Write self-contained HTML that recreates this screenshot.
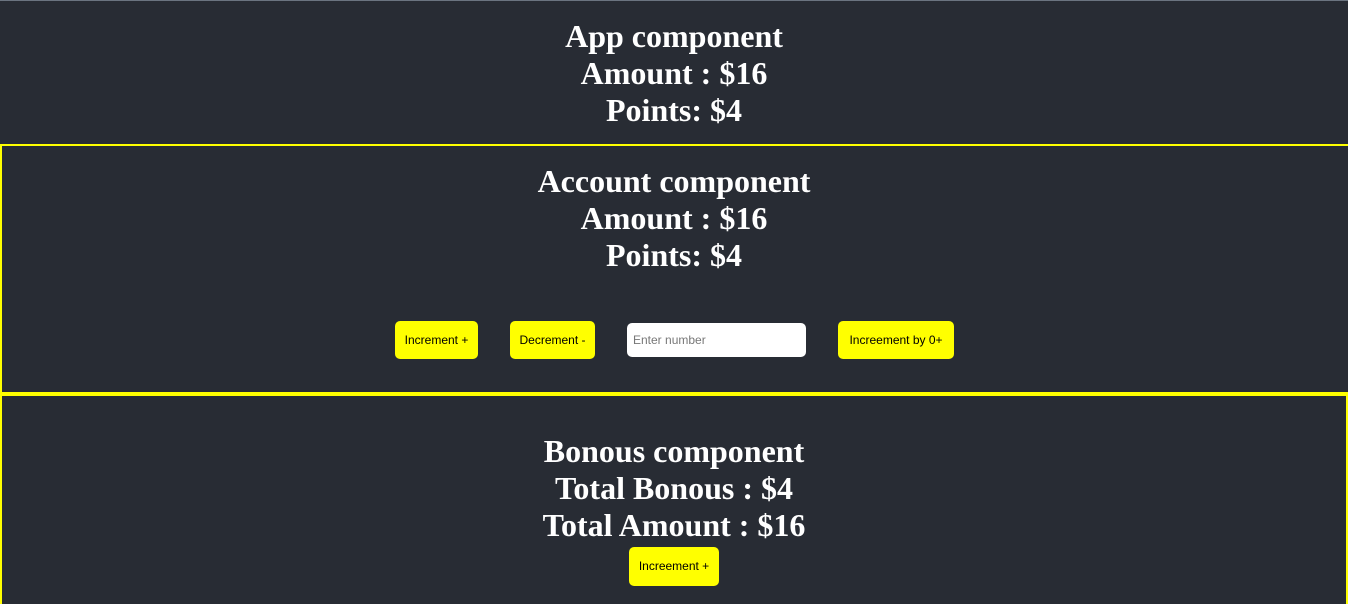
<!DOCTYPE html>
<html><head><style>
html,body{margin:0;padding:0;width:1348px;height:604px;overflow:hidden;background:#282c34;}
.t{position:absolute;left:0;width:1348px;text-align:center;color:#fff;font-family:"Liberation Serif",serif;font-weight:bold;font-size:32px;line-height:37px;}
.b{position:absolute;background:#ff0;border-radius:5px;font-family:"Liberation Sans",sans-serif;font-size:12px;color:#000;text-align:center;line-height:38px;height:38px;}
</style></head><body>
<div style="position:absolute;left:0;top:0;width:1348px;height:1px;background:#6b7480"></div>
<div class="t" style="top:18px">App component<br>Amount : $16<br>Points: $4</div>
<div style="position:absolute;left:0;top:144px;width:1346px;height:246px;border:2px solid #ff0;border-right:none"></div>
<div style="position:absolute;left:0;top:394px;width:1344px;height:208px;border:2px solid #ff0;border-bottom:none"></div>
<div class="t" style="top:163px">Account component<br>Amount : $16<br>Points: $4</div>
<div class="b" style="left:395px;top:321px;width:83px">Increment +</div>
<div class="b" style="left:510px;top:321px;width:85px">Decrement -</div>
<div style="position:absolute;left:627px;top:323px;width:179px;height:34px;background:#fff;border-radius:5px;font-family:'Liberation Sans',sans-serif;font-size:12px;color:#777;line-height:34px;padding-left:6px;box-sizing:border-box">Enter number</div>
<div class="b" style="left:838px;top:321px;width:116px">Increement by 0+</div>
<div class="t" style="top:433px">Bonous component<br>Total Bonous : $4<br>Total Amount : $16</div>
<div class="b" style="left:629px;top:547px;width:90px;height:39px;line-height:39px">Increement +</div>
</body></html>
